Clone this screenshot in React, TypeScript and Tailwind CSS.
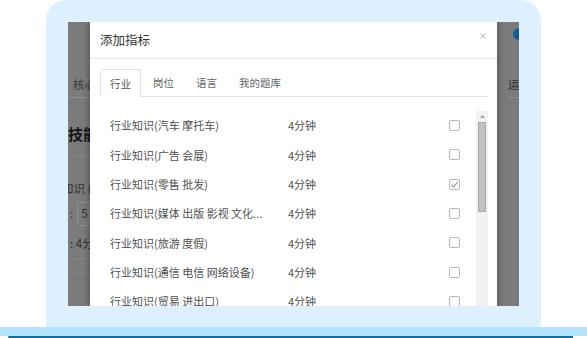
import { X } from 'lucide-react';

const rows = [
  { name: '行业知识(汽车 摩托车)', checked: false },
  { name: '行业知识(广告 会展)', checked: false },
  { name: '行业知识(零售 批发)', checked: true },
  { name: '行业知识(媒体 出版 影视 文化...', checked: false },
  { name: '行业知识(旅游 度假)', checked: false },
  { name: '行业知识(通信 电信 网络设备)', checked: false },
  { name: '行业知识(贸易 进出口)', checked: false },
];

const tabs = ['行业', '岗位', '语言', '我的题库'];

function CheckBox({ checked }: { checked: boolean }) {
  return (
    <span className="flex h-[11px] w-[11px] items-center justify-center rounded-[2px] border border-[#b8b8b8] bg-white">
      {checked && (
        <svg width="9" height="9" viewBox="0 0 9 9" fill="none">
          <path d="M1.2 4.6 L3.5 6.9 L8 1.6" stroke="#9a9a9a" strokeWidth="1.1" />
        </svg>
      )}
    </span>
  );
}

export default function App() {
  return (
    <div
      className="h-[338px] w-[587px] overflow-hidden bg-white"
      style={{ fontFamily: "'Noto Sans CJK SC', 'Noto Sans', sans-serif" }}
    >
      {/* laptop frame */}
      <div className="ml-[46px] h-[327px] w-[495px] rounded-t-[20px] bg-[#dcf1fd] px-[22px] pt-[22px]">
        <div className="flex h-[284px] overflow-hidden bg-[#7b7b7b]">
          {/* page behind the dialog, left edge */}
          <div className="w-[22px] shrink-0 overflow-hidden whitespace-nowrap text-[11.5px] text-[#2e2e2e]">
            <div className="mt-[50px] flex h-[26px] items-center border-b border-[#86919a] pl-[5px] text-[#3c3c3c]">
              核心
            </div>
            <div className="flex h-[59px] items-center border-b border-[#858585] pt-[14px] text-[15px] font-bold text-[#151515]">
              技能
            </div>
            <div className="-ml-[6px] mt-[20px] flex h-[24px] items-center">知识 (</div>
            <div className="flex h-[26px] items-center gap-[4px] pl-[2px]">
              <span>:</span>
              <span className="flex h-[24px] w-[30px] items-center rounded-[3px] border border-[#8e8e8e] pl-[3px]">5</span>
            </div>
            <div className="mt-[4px] flex h-[26px] items-center pl-[2px]">: 4分钟</div>
            <div className="mt-[1px] border-b border-[#858585]" />
            <div className="mt-[14px] border-b border-dashed border-[#8c8c8c]" />
          </div>

          {/* dialog */}
          <div className="relative z-10 w-[407px] shrink-0 bg-white shadow-[0_0_7px_rgba(0,0,0,0.45)]">
            <div className="flex h-[37px] items-center justify-between border-b border-[#e8e8e8] pl-[10px] pr-[9px]">
              <span className="text-[12.5px] text-[#333]">添加指标</span>
              <X size={10} strokeWidth={1.4} className="-mt-[8px] text-[#8a8a8a]" />
            </div>

            <div className="pl-[10px] pr-[9px] pt-[10px]">
              <div className="flex h-[28px] border-b border-[#e4e4e4]">
                {tabs.map((t, i) => (
                  <div
                    key={t}
                    className={
                      i === 0
                        ? '-mb-px mr-[2px] flex items-center rounded-t-[3px] border border-b-0 border-[#e2e2e2] bg-white px-[9px] text-[10.5px] text-[#555]'
                        : 'mr-[2px] flex items-center border border-transparent px-[9px] text-[10.5px] text-[#666]'
                    }
                  >
                    {t}
                  </div>
                ))}
              </div>

              <div className="mt-[14px] flex">
                <div className="flex-1">
                  {rows.map((r) => (
                    <div key={r.name} className="flex h-[29.3px] items-center pl-[10px] text-[11px] text-[#505050]">
                      <span className="w-[178px] whitespace-nowrap">{r.name}</span>
                      <span className="flex-1">4分钟</span>
                      <span className="mr-[16px]">
                        <CheckBox checked={r.checked} />
                      </span>
                    </div>
                  ))}
                </div>
                {/* scrollbar */}
                <div className="flex h-[200px] w-[12px] flex-col items-center bg-[#f1f1f1]">
                  <div className="flex h-[11px] w-full items-center justify-center">
                    <svg width="5" height="3" viewBox="0 0 5 3">
                      <path d="M0 3 L2.5 0 L5 3 Z" fill="#a3a3a3" />
                    </svg>
                  </div>
                  <div className="h-[90px] w-[8px] border border-[#a9a9a9] bg-[#c1c1c1]" />
                </div>
              </div>
            </div>
          </div>

          {/* page behind the dialog, right edge */}
          <div className="w-[22px] shrink-0 overflow-hidden whitespace-nowrap text-[11.5px] text-[#2e2e2e]">
            <div className="ml-[16px] mt-[6px] h-[12px] w-[12px] rounded-full bg-[#0f5d96]" />
            <div className="ml-[11px] mt-[32px] flex h-[26px] items-center border-b border-[#86919a]">运营</div>
          </div>
        </div>
      </div>

      {/* base */}
      <div className="h-[9px] w-full bg-[#b3e4fb]" />
      <div className="ml-[8px] mr-[14px] h-[2px] rounded-l-[4px] bg-[#1b6c99]" />
    </div>
  );
}
